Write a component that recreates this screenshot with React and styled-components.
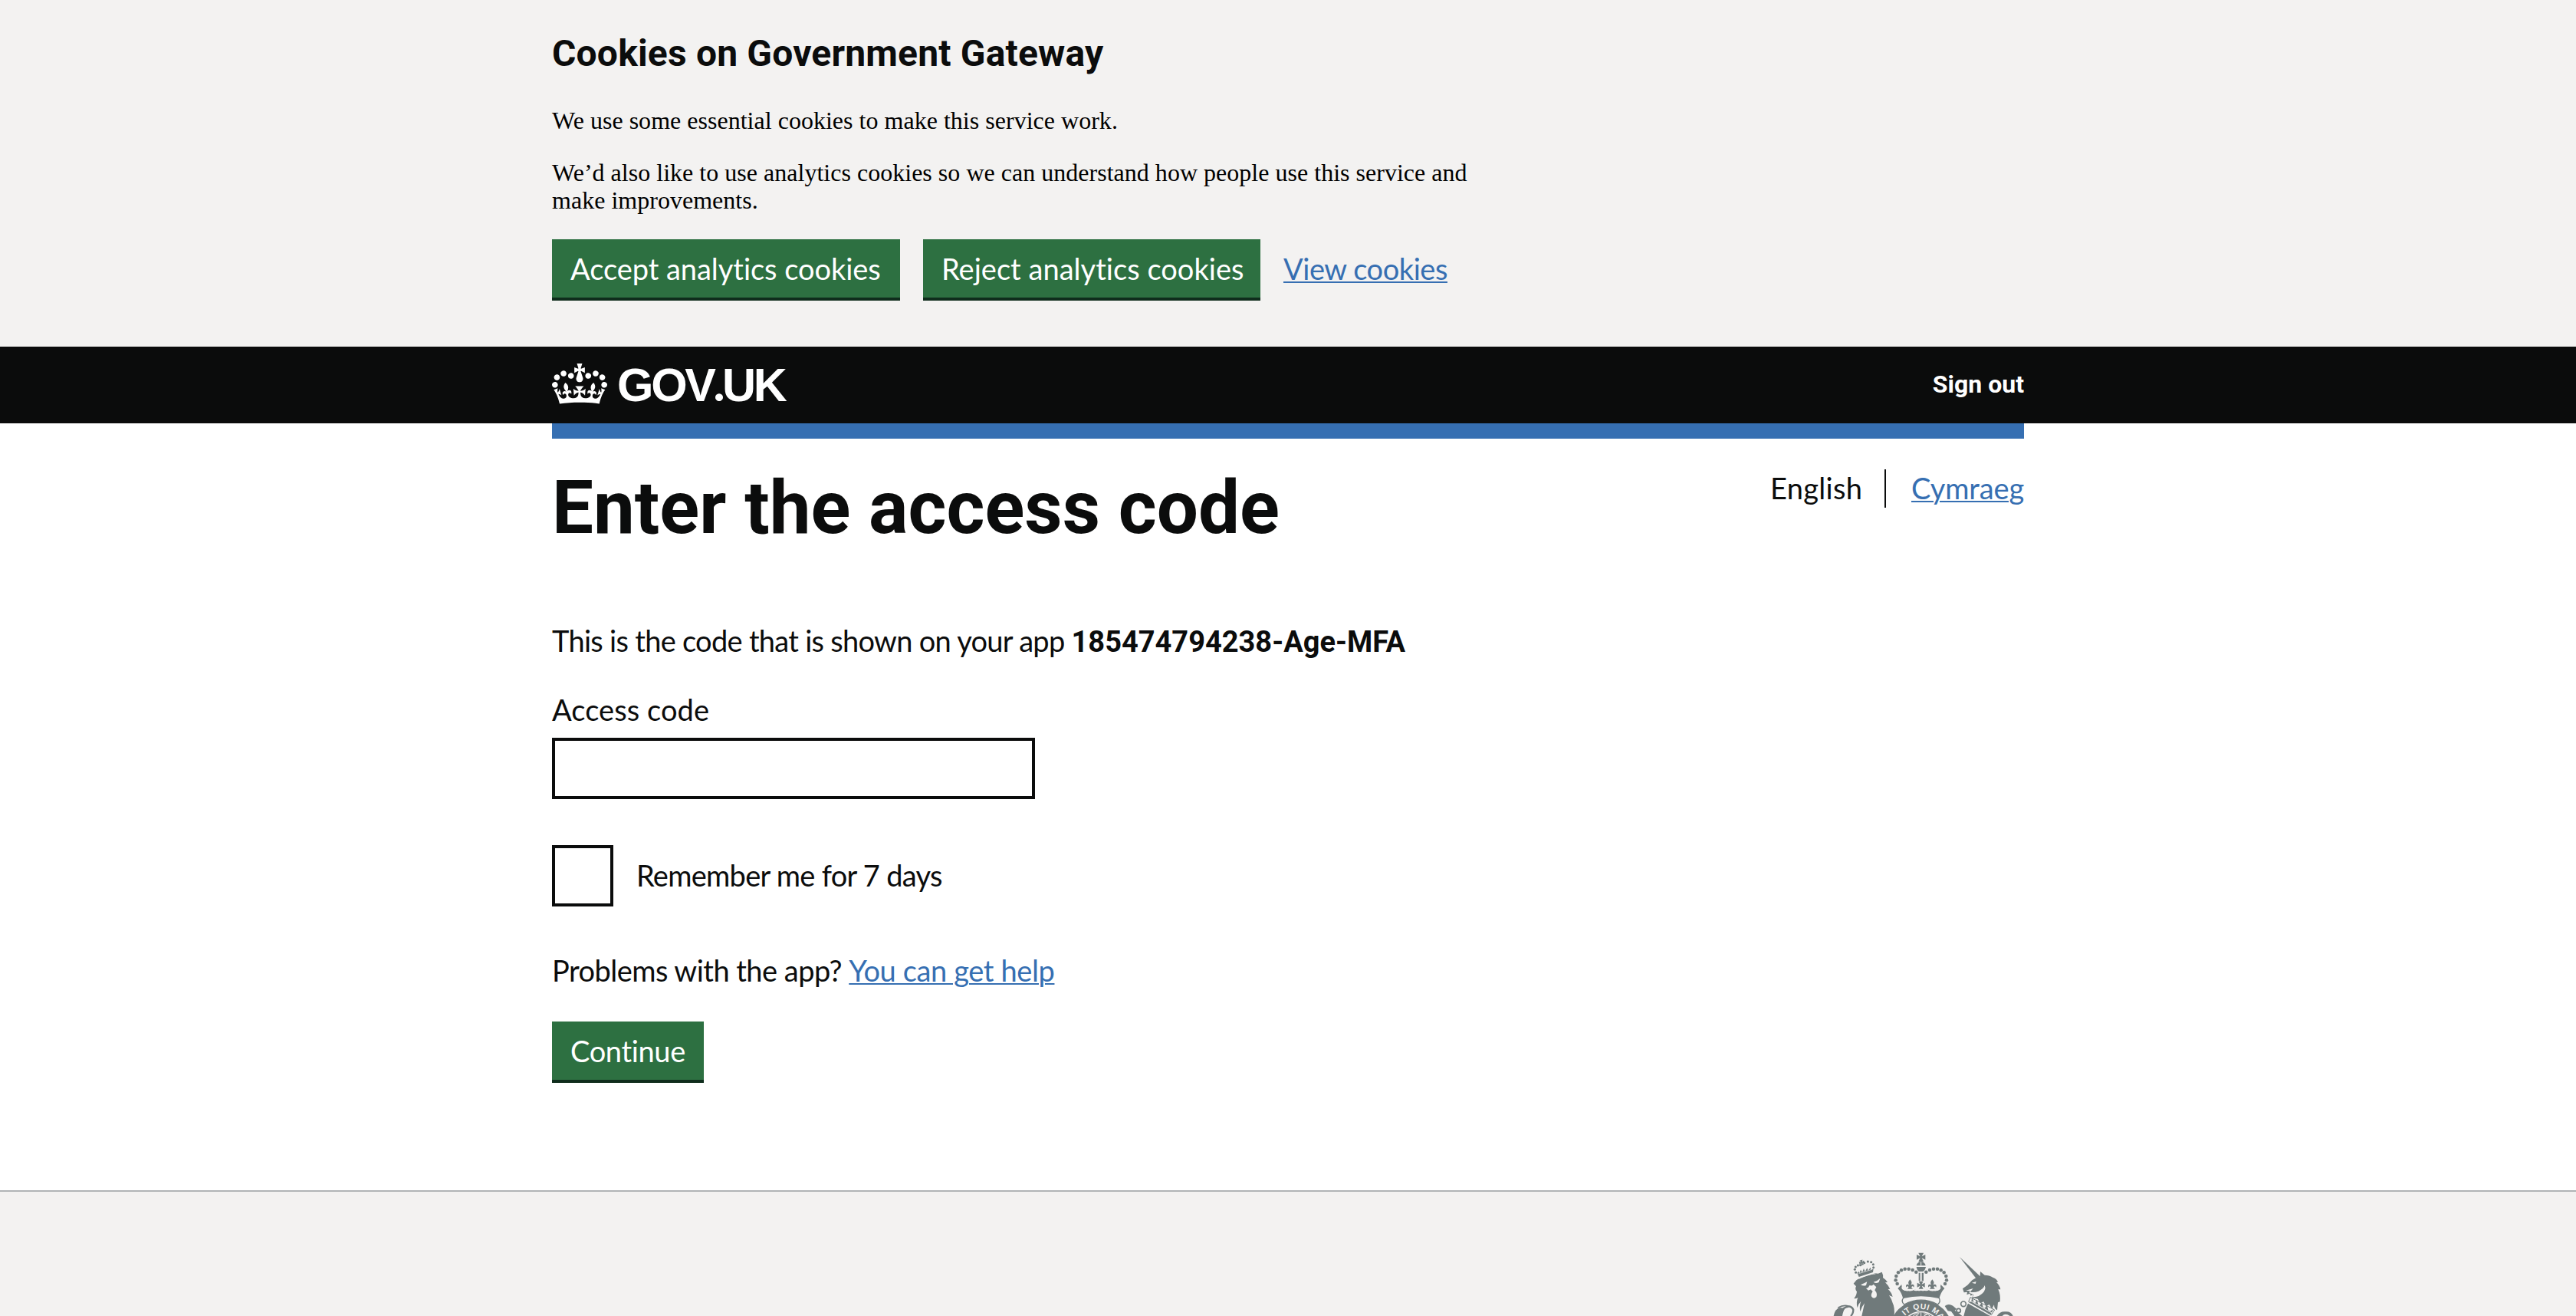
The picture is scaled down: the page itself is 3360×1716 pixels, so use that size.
import React from 'react';
import styled, { createGlobalStyle } from 'styled-components';

const ink = '#0b0c0c';
const paper = '#f3f2f1';
const blue = '#366fb2';
const green = '#2d7041';
const crest = '#707a7b';

const GlobalStyle = createGlobalStyle`
  *, *::before, *::after { box-sizing: border-box; }
  body {
    margin: 0;
    background: #fff;
    color: ${ink};
    font-family: Lato, "Noto Sans", sans-serif;
    font-size: 38px;
    line-height: 50px;
    font-variant-ligatures: none;
  }
  h1, h2, p { margin: 0; }
`;

const Page = styled.div`
  height: 1716px;
  overflow: hidden;
  display: flex;
  flex-direction: column;
`;

const Container = styled.div`
  width: 1920px;
  margin: 0 auto;
`;

const Strong = styled.strong`
  font-family: Roboto, sans-serif;
  font-weight: 700;
  line-height: 1;
`;

const Text = styled.span`
  letter-spacing: ${p => p.$tracking || 0}px;
`;

const Link = styled.a`
  color: ${blue};
  letter-spacing: ${p => p.$tracking || 0}px;
  text-decoration: underline;
  text-decoration-thickness: 2px;
  text-underline-offset: 2px;
`;

const Banner = styled.section`
  height: 452px;
  flex: none;
  padding-top: 40px;
  background: ${paper};
`;

const BannerHeading = styled.h2`
  margin-bottom: 39px;
  font: 700 48px/60px Roboto, sans-serif;
  letter-spacing: 0.18px;
`;

const BannerCopy = styled.p`
  width: 1240px;
  margin-bottom: 32px;
  color: #000;
  font: 32px/36px "Liberation Serif", serif;
  letter-spacing: 0.02px;
`;

const ButtonGroup = styled.div`
  display: flex;
  align-items: flex-start;
  gap: 30px;
  padding-top: 1px;
`;

const Button = styled.button`
  width: ${p => p.$width}px;
  height: 76px;
  flex: none;
  padding: 19px 0 19px 24px;
  border: 0;
  background: ${green};
  box-shadow: 0 4px 0 #0f2d1c;
  color: #fff;
  font: 400 38px/38px Lato, sans-serif;
  font-variant-ligatures: none;
  letter-spacing: ${p => p.$tracking || 0}px;
  text-align: left;
  white-space: nowrap;
`;

const BannerLink = styled(Link)`
  padding-top: 13px;
`;

const Header = styled.header`
  height: 100px;
  flex: none;
  background: ${ink};
  color: #fff;
`;

const HeaderRow = styled(Container)`
  height: 100px;
  display: flex;
  align-items: center;
  justify-content: space-between;
`;

const Logo = styled.div`
  display: flex;
  align-items: center;
  gap: 13px;
  padding-bottom: 4px;
`;

const Wordmark = styled.span`
  font: 700 61px/60px "Liberation Sans", sans-serif;
  letter-spacing: -3.3px;
`;

const Dot = styled.span`
  font-family: Lato, sans-serif;
  font-weight: 900;
  line-height: 1;
`;

const SignOut = styled.a`
  padding-bottom: 2px;
  font: 700 32px/40px Roboto, sans-serif;
`;

const BlueBar = styled(Container)`
  height: 20px;
  flex: none;
  background: ${blue};
`;

const Main = styled(Container)`
  flex: none;
  height: 980px;
  padding-top: 40px;
`;

const TitleRow = styled.div`
  display: flex;
  align-items: flex-start;
  justify-content: space-between;
  margin-bottom: 98px;
`;

const Title = styled.h1`
  font: 700 96px/100px Roboto, sans-serif;
`;

const Languages = styled.nav`
  display: flex;
  gap: 33px;
  height: 50px;
  line-height: 48px;
`;

const Current = styled.span`
  width: 151px;
  border-right: 2px solid ${ink};
  letter-spacing: 0.3px;
`;

const LanguageLink = styled(Link)`
  width: 147px;
`;

const Paragraph = styled.p`
  margin-bottom: ${p => p.$gap}px;
`;

const Label = styled.label`
  display: block;
  margin-bottom: 12px;
  letter-spacing: 0.08px;
`;

const Input = styled.input`
  display: block;
  width: 630px;
  height: 80px;
  margin: 0 0 60px;
  border: 4px solid ${ink};
  border-radius: 0;
  outline: 0;
`;

const CheckRow = styled.label`
  display: flex;
  gap: 30px;
  margin-bottom: 58px;
  line-height: 79px;
  letter-spacing: -0.72px;
`;

const Checkbox = styled.input`
  appearance: none;
  width: 80px;
  height: 80px;
  margin: 0;
  border: 4px solid ${ink};
`;

const Footer = styled.footer`
  flex: none;
  height: 164px;
  padding-top: 66px;
  border-top: 2px solid #b1b4b6;
  background: ${paper};
`;

const FooterRow = styled(Container)`
  display: flex;
  justify-content: flex-end;
`;

function Crown() {
  return (
    <svg width="72" height="53" viewBox="0 0 132 97" fill="#fff" aria-hidden="true">
      <path fillRule="evenodd" d="M25 30.2c3.5 1.5 7.7-.2 9.1-3.7 1.5-3.6-.2-7.8-3.9-9.2-3.6-1.4-7.6.3-9.1 3.9-1.4 3.5.3 7.5 3.9 9zM9 39.5c3.6 1.5 7.8-.2 9.2-3.7 1.5-3.6-.2-7.8-3.9-9.1-3.6-1.5-7.6.2-9.1 3.8-1.4 3.5.3 7.5 3.8 9zM4.4 57.2c3.5 1.5 7.7-.2 9.1-3.8 1.5-3.6-.2-7.7-3.9-9.1-3.5-1.5-7.6.3-9.1 3.8-1.4 3.5.3 7.6 3.9 9.1zm38.3-21.4c3.5 1.5 7.7-.2 9.1-3.8 1.5-3.6-.2-7.7-3.9-9.1-3.6-1.5-7.6.3-9.1 3.8-1.3 3.6.4 7.7 3.9 9.1zm64.4-5.6c-3.6 1.5-7.8-.2-9.1-3.7-1.5-3.6.2-7.8 3.8-9.2 3.6-1.4 7.7.3 9.2 3.9 1.3 3.5-.4 7.5-3.9 9zm15.9 9.3c-3.6 1.5-7.7-.2-9.1-3.7-1.5-3.6.2-7.8 3.7-9.1 3.6-1.5 7.7.2 9.2 3.8 1.5 3.5-.3 7.5-3.8 9zm4.7 17.7c-3.6 1.5-7.8-.2-9.2-3.8-1.5-3.6.2-7.7 3.9-9.1 3.6-1.5 7.7.3 9.2 3.8 1.3 3.5-.4 7.6-3.9 9.1zM89.3 35.8c-3.6 1.5-7.8-.2-9.2-3.8-1.4-3.6.2-7.7 3.9-9.1 3.6-1.5 7.7.3 9.2 3.8 1.4 3.6-.3 7.7-3.9 9.1zM69.7 17.7l8.9 4.7V9.3l-8.9 2.8c-.2-.3-.5-.6-.9-.9L72.4 0H59.6l3.5 11.2c-.3.3-.6.5-.9.9l-8.8-2.8v13.1l8.8-4.7c.3.3.6.7.9.9l-5 15.4v.1c-.2.8-.4 1.6-.4 2.4 0 4.1 3.1 7.5 7 8.1h.2c.3 0 .7.1 1 .1.4 0 .7 0 1-.1h.2c4-.6 7.1-4.1 7.1-8.1 0-.8-.1-1.7-.4-2.4V34l-5.1-15.4c.4-.2.7-.6 1-.9zM66 92.8c16.9 0 32.8 1.1 47.1 3.2 4-16.9 8.9-26.7 14-33.5l-9.6-3.4c1 4.9 1.1 7.2 0 10.2-1.5-1.4-3-4.3-4.2-8.7L108.6 76c2.8-2 5-3.2 7.5-3.3-4.4 9.4-10 11.9-13.6 11.2-4.3-.8-6.3-4.6-5.6-7.9 1-4.7 5.7-5.9 8-.5 4.3-8.7-3-11.4-7.6-8.8 7.1-7.2 7.9-13.5 2.1-21.1-8 6.1-8.1 12.3-4.5 20.8-4.7-5.4-12.1-2.5-9.5 6.2 3.4-5.2 7.9-2 7.2 3.1-.6 4.3-6.4 7.8-13.5 7.2-10.3-.9-10.9-8-11.2-13.8 2.5-.5 7.1 1.8 11 7.3L80.2 60c-4.1 4.4-8 5.3-12.3 5.4 1.4-4.4 8-11.6 8-11.6H55.5s6.4 7.2 7.9 11.6c-4.2-.1-8-1-12.3-5.4l1.4 16.4c3.9-5.5 8.5-7.7 10.9-7.3-.3 5.8-.9 12.8-11.1 13.8-7.2.6-12.9-2.9-13.5-7.2-.7-5 3.8-8.3 7.1-3.1 2.7-8.7-4.6-11.6-9.4-6.2 3.7-8.5 3.6-14.7-4.6-20.8-5.8 7.6-5 13.9 2.2 21.1-4.7-2.6-11.9.1-7.7 8.8 2.3-5.5 7.1-4.2 8.1.5.7 3.3-1.3 7.1-5.7 7.9-3.5.7-9-1.8-13.5-11.2 2.5.1 4.7 1.3 7.5 3.3l-4.7-15.4c-1.2 4.4-2.7 7.2-4.3 8.7-1.1-3-.9-5.3 0-10.2l-9.5 3.4c5 6.9 9.9 16.7 14 33.5 14.8-2.1 30.8-3.2 47.7-3.2z" />
    </svg>
  );
}

const crownPearls = [[44, 132], [38, 118], [40, 102], [48, 88], [60, 79], [74, 74], [89, 74], [104, 78], [118, 86]];
const lionPearls = [[107, 88], [103, 76], [106, 66], [115, 60], [125, 59], [140, 50], [154, 45], [167, 47], [175, 56], [176, 68]];

const Cross = ({ x, y, r }) => (
  <path
    transform={`translate(${x} ${y}) scale(${r})`}
    d="M-.6-1H.6L.18-.18 1-.6V.6L.18.18.6 1H-.6L-.18.18-1 .6V-.6L-.18-.18Z"
  />
);

const Fleur = ({ x, y }) => (
  <path
    transform={`translate(${x} ${y})`}
    d="M0-18C-8-8-8-4-3 4C-11-2-19 4-15 13C-11 6-6 8-6 13C-7 17-11 19-14 19H14C11 19 7 17 6 13C6 8 11 6 15 13C19 4 11-2 3 4C8-4 8-8 0-18Z"
  />
);

function RoyalArms() {
  return (
    <svg width="260" height="96" viewBox="60 270 780 288" fill={crest} aria-hidden="true">
      <defs>
        <path id="motto" d="M349 619A88 88 0 0 1 525 619" />
      </defs>

      <circle cx="437" cy="619" r="124" />
      <circle cx="437" cy="619" r="80" fill={paper} />
      <circle cx="437" cy="619" r="75" />
      <g stroke={paper} strokeWidth="3" fill="none">
        <path d="M437 544V560M404 560Q416 545 430 548M413 560L427 553M448 549Q462 546 474 560M448 558L460 552" />
      </g>
      <text fill={paper} fontFamily="Liberation Sans, sans-serif" fontWeight="700" fontSize="31" letterSpacing="1.5" textAnchor="middle">
        <textPath href="#motto" startOffset="54%">IT QUI MA</textPath>
      </text>

      <g transform="translate(300 300)">
        <Cross x={137} y={28} r={17} />
        <path d="M119 61Q121 47 137 44Q153 47 155 61ZM119 66H156Q153 80 145 84H129Q121 80 119 66Z" />
        <path d="M137 46V61" stroke={paper} strokeWidth="3" />
        <path d="M128 89H134V120H128ZM140 89H147V120H140Z" />
        {crownPearls.map(([x, y]) => (
          <g key={`${x}-${y}`}>
            <circle cx={x} cy={y} r="6.8" />
            <circle cx={275 - x} cy={y} r="6.8" />
          </g>
        ))}
        <path d="M46 150L61 135L63 153Q73 162 88 160Q102 163 112 153Q124 164 137 158Q151 164 163 153Q173 163 187 160Q202 162 212 153L214 135L229 150Q215 164 208 190Q137 171 67 190Q60 164 46 150Z" />
        <path d="M62 146Q72 162 87 154M107 154Q124 163 130 147M145 147Q151 163 168 154M188 154Q204 162 213 146" stroke={paper} strokeWidth="5" fill="none" />
        <Fleur x={94} y={133} />
        <Fleur x={181} y={133} />
        <Cross x={137} y={137} r={15} />
        <path d="M68 187Q137 170 207 187Q216 200 203 213Q137 178 71 213Q58 201 68 187Z" fill={paper} stroke={crest} strokeWidth="4" />
      </g>

      <g transform="translate(75 300)">
        {lionPearls.map(([x, y]) => <circle key={`${x}-${y}`} cx={x} cy={y} r="4.6" />)}
        <g transform="rotate(-16 130 48)"><Cross x={130} y={49} r={10} /></g>
        <path d="M113 91L118 83L121 91L126 77L132 88L138 72L143 85L151 70L155 81L164 68L167 78L176 73L174 87L119 105Z" />
        <path d="M118 92L170 76" stroke={paper} strokeWidth="2" />
        <path d="M98 131L109 118L120 111L182 91L194 92L209 86Q215 98 213 108Q225 116 231 126L222 127Q236 140 241 152L233 153Q247 166 251 183L237 177Q247 191 251 207Q260 224 257 258H130L141 208Q131 220 124 241Q120 220 127 200Q117 210 113 226Q107 205 115 186Q106 192 100 189Q109 180 111 163Q102 153 108 142Z" />
        <path d="M118 113Q155 93 184 93" stroke={paper} strokeWidth="2.5" fill="none" />
        <path d="M126 136Q140 130 151 124L147 138Q137 142 126 136ZM176 125Q191 122 202 111L197 126Q185 132 176 125ZM147 150Q158 147 161 138Q171 142 176 134L187 145L181 157Q193 171 187 184Q177 193 169 183Q164 175 173 162L165 154L156 158Z" fill={paper} />
        <path d="M20 258Q26 230 43 226Q57 225 64 230Q57 238 54 258Z" />
        <path d="M58 229Q86 210 97 233Q97 249 87 258" stroke={crest} strokeWidth="7" fill="none" />
        <path d="M37 226Q60 212 79 220" stroke={crest} strokeWidth="5" fill="none" />
      </g>

      <g transform="translate(540 300)">
        <path d="M48 27L130 104L114 113Z" />
        <path d="M60 151L79 137L97 118L112 109L128 105L129 84L146 98Q165 98 178 107Q193 112 198 125L192 126Q205 138 208 154L199 154Q209 174 206 202L198 205L195 235Q183 231 183 214L174 230L164 213L151 220L142 202L128 207L119 191L97 187L101 172L92 179L88 170L76 175L78 164L65 166Z" />
        <path d="M96 128L113 123L110 132ZM73 158L101 150L89 164Q107 167 122 161Q143 150 146 138Q153 154 138 169Q119 187 99 183L103 174L86 168L88 160Z" fill={paper} />
        <path d="M90 185L185 234L172 254L83 202Z" fill={paper} stroke={crest} strokeWidth="3" />
        <path d="M93 202L98 184L103 204L109 208L116 193L121 214L127 217L135 203L140 224L147 227L155 213L160 235L168 239L180 231L170 252L85 205Z" />
        <path d="M89 198L174 246" stroke={paper} strokeWidth="3" />
        <path d="M81 209L168 258H64Q69 230 81 209Z" />
        <circle cx="63" cy="211" r="10" fill="none" stroke={crest} strokeWidth="5" />
        <circle cx="44" cy="237" r="8" fill="none" stroke={crest} strokeWidth="5" />
        <path d="M-10 219Q5 207 22 218L36 230L29 236L47 249L58 258H28L15 240L2 238Z" />
        <path d="M194 258Q206 238 229 241Q250 240 257 258H245Q226 244 215 258Z" />
      </g>
    </svg>
  );
}

export default function App() {
  return (
    <Page>
      <GlobalStyle />
      <Banner>
        <Container>
          <BannerHeading>Cookies on Government Gateway</BannerHeading>
          <BannerCopy>We use some essential cookies to make this service work.</BannerCopy>
          <BannerCopy>
            We’d also like to use analytics cookies so we can understand how people use this service and make improvements.
          </BannerCopy>
          <ButtonGroup>
            <Button $width={454} $tracking={-0.04}>Accept analytics cookies</Button>
            <Button $width={440} $tracking={0.03}>Reject analytics cookies</Button>
            <BannerLink $tracking={-0.45}>View cookies</BannerLink>
          </ButtonGroup>
        </Container>
      </Banner>

      <Header>
        <HeaderRow>
          <Logo>
            <Crown />
            <Wordmark>GOV<Dot>.</Dot>UK</Wordmark>
          </Logo>
          <SignOut>Sign out</SignOut>
        </HeaderRow>
      </Header>
      <BlueBar />

      <Main as="main">
        <TitleRow>
          <Title>Enter the access code</Title>
          <Languages>
            <Current>English</Current>
            <LanguageLink $tracking={-0.1}>Cymraeg</LanguageLink>
          </Languages>
        </TitleRow>
        <Paragraph $gap={40}>
          <Text $tracking={-0.71}>This is the code that is shown on your app </Text>
          <Strong>185474794238-Age-MFA</Strong>
        </Paragraph>
        <Label htmlFor="code">Access code</Label>
        <Input id="code" />
        <CheckRow>
          <Checkbox type="checkbox" />
          Remember me for 7 days
        </CheckRow>
        <Paragraph $gap={42}>
          <Text $tracking={-0.52}>Problems with the app? </Text>
          <Link $tracking={-0.38}>You can get help</Link>
        </Paragraph>
        <Button $width={198} $tracking={-0.35}>Continue</Button>
      </Main>

      <Footer>
        <FooterRow>
          <RoyalArms />
        </FooterRow>
      </Footer>
    </Page>
  );
}
